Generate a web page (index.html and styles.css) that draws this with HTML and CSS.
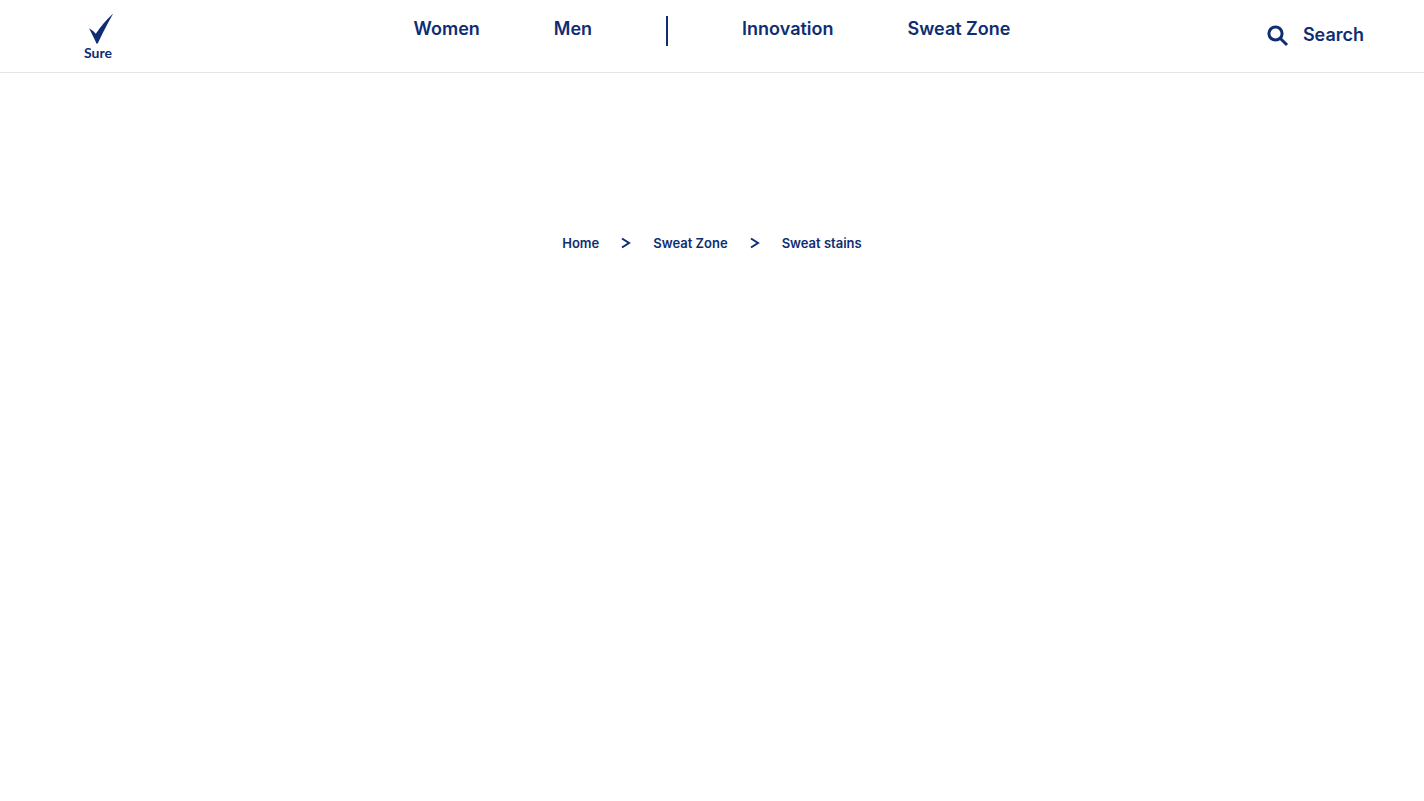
FILE: index.html
```html
<!DOCTYPE html>
<html lang="en">
<head>
<meta charset="utf-8">
<meta name="viewport" content="width=device-width, initial-scale=1">
<title>Sweat stains | Sure</title>
<link rel="stylesheet" href="styles.css">
</head>
<body>
<header class="header">
  <a class="logo" href="#" aria-label="Sure home">
    <svg class="logo-tick" viewBox="0 0 26 32" aria-hidden="true"><path d="M25.2 0.4C21 8 15 19 10.200 29.500Q9.400 31.300 8.500 30.600C6.500 26 3.800 20.500 1 15.200Q4.500 17 7.800 20.800C12.500 13.500 18.500 6.500 25.200 0.400Z"/></svg>
    <span class="logo-name">Sure</span>
  </a>
  <nav class="nav" aria-label="Main">
    <a href="#">Women</a>
    <a href="#">Men</a>
    <span class="divider"></span>
    <a href="#">Innovation</a>
    <a href="#">Sweat Zone</a>
  </nav>
  <button class="search" type="button">
    <svg class="search-icon" viewBox="0 0 22 22" aria-hidden="true"><circle cx="8.500" cy="8.500" r="6.600"/><path d="M13.200 13.200L20 20"/></svg>
    Search
  </button>
</header>
<main>
  <nav aria-label="Breadcrumb">
    <ol class="breadcrumb">
      <li><a href="#">Home</a></li>
      <li aria-hidden="true"><svg class="chevron" viewBox="0 0 10 12"><path d="M1 1.500L8 6L1 10.500"/></svg></li>
      <li><a href="#">Sweat Zone</a></li>
      <li aria-hidden="true"><svg class="chevron" viewBox="0 0 10 12"><path d="M1 1.500L8 6L1 10.500"/></svg></li>
      <li><a href="#" aria-current="page">Sweat stains</a></li>
    </ol>
  </nav>
</main>
</body>
</html>
```

FILE: styles.css
```css
* { box-sizing: border-box; }
body {
  margin: 0;
  background: #fff;
  color: #0e2d72;
  font-family: Inter, "Liberation Sans", sans-serif;
  font-weight: 600;
}
a { color: inherit; text-decoration: none; }
.header {
  display: grid;
  grid-template-columns: 1fr auto 1fr;
  align-items: start;
  min-height: 73px;
  padding: 0 60px 0 84px;
  border-bottom: 1px solid #e4e4e4;
}
.logo {
  display: flex;
  flex-direction: column;
  justify-self: start;
  padding-top: 13px;
}
.logo-tick {
  width: 26px;
  height: 32px;
  margin-left: 4px;
  fill: #0e2d72;
}
.logo-name {
  font: 700 14px/16px Lato, sans-serif;
}
.nav {
  display: flex;
  gap: 74px;
  padding-top: 16px;
  margin-left: -24px;
  font-size: 18px;
  line-height: 26px;
}
.divider {
  width: 2px;
  height: 30px;
  background: #0e2d72;
}
.search {
  display: flex;
  align-items: center;
  justify-self: end;
  gap: 14px;
  padding: 22px 0 0;
  border: 0;
  background: none;
  color: inherit;
  font: inherit;
  font-size: 18px;
  line-height: 26px;
}
.search-icon {
  width: 22px;
  height: 22px;
  margin-top: 2px;
  fill: none;
  stroke: #0e2d72;
  stroke-width: 3;
}
.breadcrumb {
  display: flex;
  justify-content: center;
  align-items: center;
  gap: 22px;
  margin: 160px 0 0;
  padding: 0;
  list-style: none;
  font-size: 13px;
  line-height: 20px;
}
.chevron {
  display: block;
  width: 10px;
  height: 12px;
  fill: none;
  stroke: #0e2d72;
  stroke-width: 2;
}
```
